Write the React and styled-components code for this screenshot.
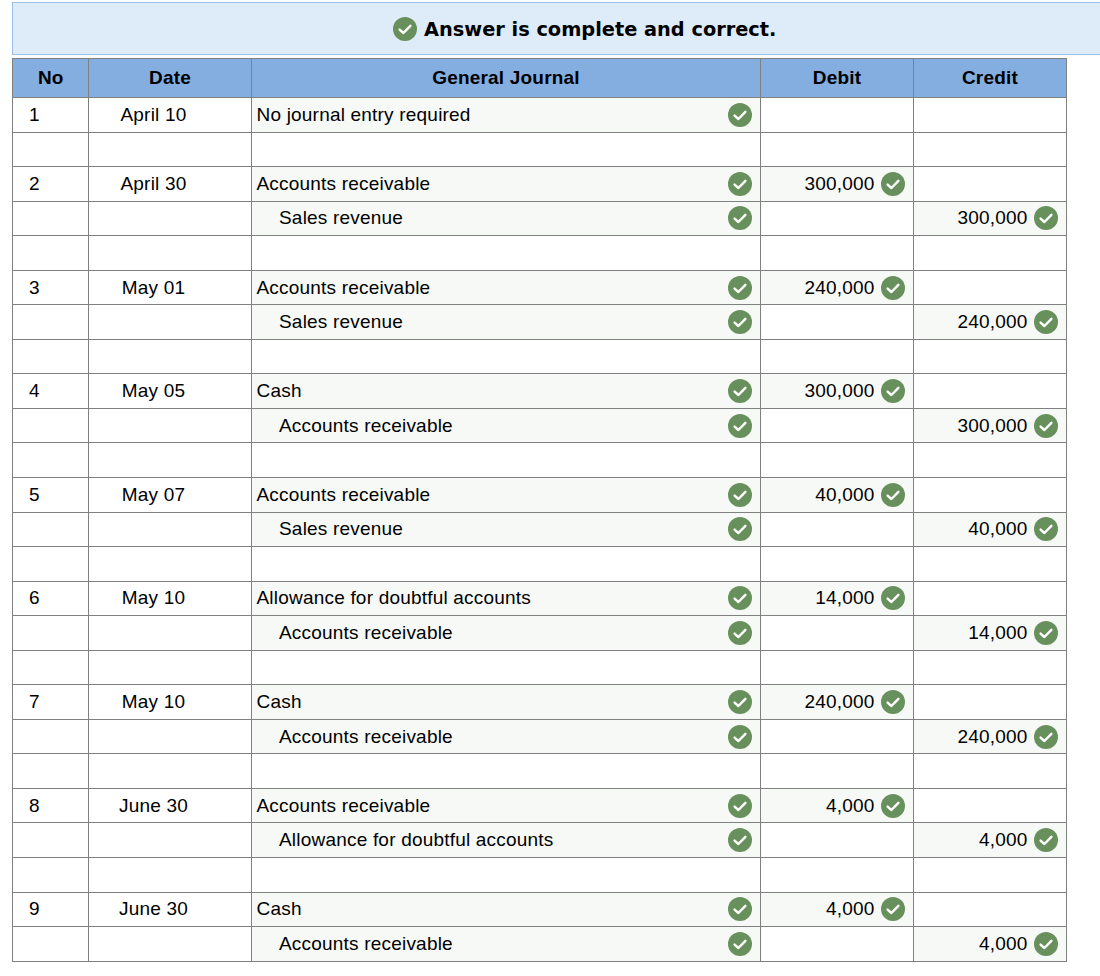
import React from "react";
import styled, { createGlobalStyle } from "styled-components";

const GlobalStyle = createGlobalStyle`
   html, body {
      margin: 0;
      background: #fff;
      color: #000;
      font-family: "Liberation Sans", Arial, sans-serif;
   }
`;

const Page = styled.div`
   width: 1100px;
   height: 976px;
   padding: 2px 0 0 12px;
   box-sizing: border-box;
   overflow: hidden;
`;

const Banner = styled.div`
   height: 53px;
   box-sizing: border-box;
   border: 1px solid #9cbfe2;
   border-right: 0;
   background: #deebf9;
   display: flex;
   align-items: center;
   gap: 7px;
   padding-left: 380px;
`;

const BannerText = styled.span`
   font-family: "DejaVu Sans", Verdana, sans-serif;
   font-weight: bold;
   font-size: 19.35px;
   padding-top: 2px;
`;

const Table = styled.div`
   margin-top: 3px;
   width: 1055px;
   border-top: 1.5px solid #808080;
   border-left: 1.5px solid #808080;
   box-sizing: border-box;
`;

const Row = styled.div`
   display: grid;
   grid-template-columns: 75.5px 163px 509px 153px 153px;
   height: ${(p) => (p.$head ? "39px" : "34.56px")};
   box-sizing: border-box;
`;

const Cell = styled.div`
   display: flex;
   align-items: center;
   gap: 6px;
   box-sizing: border-box;
   border-right: ${(p) => (p.$last ? "1.5px" : "1px")} solid #808080;
   border-bottom: 1.5px solid #808080;
   background: ${(p) => (p.$filled ? "#f7f9f6" : "#fff")};
   font-size: 19px;
   letter-spacing: 0.2px;
   white-space: nowrap;
`;

const HeadCell = styled(Cell)`
   justify-content: center;
   padding-left: 1px;
   background: #84aee0;
   font-weight: bold;
`;

const NoCell = styled(Cell)`
   padding-left: 16px;
`;

const DateCell = styled(Cell)`
   justify-content: center;
   padding-right: 32px;
`;

const JournalCell = styled(Cell)`
   justify-content: space-between;
   padding: 0 8px 0 ${(p) => (p.$indent ? "27.5px" : "5px")};
`;

const AmountCell = styled(Cell)`
   justify-content: flex-end;
   padding-right: 8px;
`;

const CheckSvg = styled.svg`
   display: block;
   flex: none;
`;

function Check() {
   return (
      <CheckSvg width="24" height="24" viewBox="0 0 24 24">
         <circle cx="12" cy="12" r="12" fill="#68905c" />
         <path d="M6.6 12.6 L10.4 16 L17.4 8.8" fill="none" stroke="#fff" strokeWidth="2.4" strokeLinecap="round" strokeLinejoin="round" />
      </CheckSvg>
   );
}

const entries = [
   { no: "1", date: "April 10", lines: [{ account: "No journal entry required" }] },
   {
      no: "2",
      date: "April 30",
      lines: [
         { account: "Accounts receivable", debit: "300,000" },
         { account: "Sales revenue", credit: "300,000" },
      ],
   },
   {
      no: "3",
      date: "May 01",
      lines: [
         { account: "Accounts receivable", debit: "240,000" },
         { account: "Sales revenue", credit: "240,000" },
      ],
   },
   {
      no: "4",
      date: "May 05",
      lines: [
         { account: "Cash", debit: "300,000" },
         { account: "Accounts receivable", credit: "300,000" },
      ],
   },
   {
      no: "5",
      date: "May 07",
      lines: [
         { account: "Accounts receivable", debit: "40,000" },
         { account: "Sales revenue", credit: "40,000" },
      ],
   },
   {
      no: "6",
      date: "May 10",
      lines: [
         { account: "Allowance for doubtful accounts", debit: "14,000" },
         { account: "Accounts receivable", credit: "14,000" },
      ],
   },
   {
      no: "7",
      date: "May 10",
      lines: [
         { account: "Cash", debit: "240,000" },
         { account: "Accounts receivable", credit: "240,000" },
      ],
   },
   {
      no: "8",
      date: "June 30",
      lines: [
         { account: "Accounts receivable", debit: "4,000" },
         { account: "Allowance for doubtful accounts", credit: "4,000" },
      ],
   },
   {
      no: "9",
      date: "June 30",
      lines: [
         { account: "Cash", debit: "4,000" },
         { account: "Accounts receivable", credit: "4,000" },
      ],
   },
];

function Amount({ value, last }) {
   if (!value) return <Cell $last={last} />;
   return (
      <AmountCell $filled $last={last}>
         {value}
         <Check />
      </AmountCell>
   );
}

function JournalLine({ no, date, line, indent }) {
   return (
      <Row>
         <NoCell>{no}</NoCell>
         <DateCell>{date}</DateCell>
         <JournalCell $filled $indent={indent}>
            {line.account}
            <Check />
         </JournalCell>
         <Amount value={line.debit} />
         <Amount value={line.credit} last />
      </Row>
   );
}

function BlankRow() {
   return (
      <Row>
         <Cell />
         <Cell />
         <Cell />
         <Cell />
         <Cell $last />
      </Row>
   );
}

export default function App() {
   return (
      <Page>
         <GlobalStyle />
         <Banner>
            <Check />
            <BannerText>Answer is complete and correct.</BannerText>
         </Banner>
         <Table>
            <Row $head>
               <HeadCell>No</HeadCell>
               <HeadCell>Date</HeadCell>
               <HeadCell>General Journal</HeadCell>
               <HeadCell>Debit</HeadCell>
               <HeadCell $last>Credit</HeadCell>
            </Row>
            {entries.map((entry, i) => (
               <React.Fragment key={entry.no}>
                  {entry.lines.map((line, j) => (
                     <JournalLine
                        key={j}
                        no={j === 0 ? entry.no : ""}
                        date={j === 0 ? entry.date : ""}
                        line={line}
                        indent={j > 0}
                     />
                  ))}
                  {i < entries.length - 1 && <BlankRow />}
               </React.Fragment>
            ))}
         </Table>
      </Page>
   );
}
